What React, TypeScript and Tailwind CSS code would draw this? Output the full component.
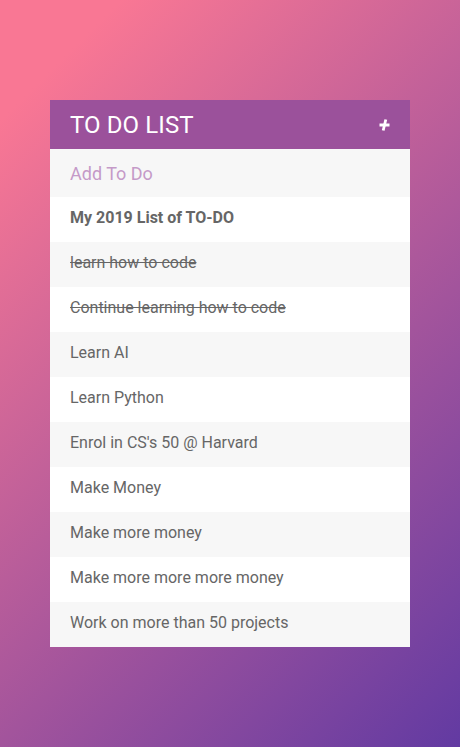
import { useState } from "react";

type Todo = {
  text: string;
  done?: boolean;
  title?: boolean;
};

const initialTodos: Todo[] = [
  { text: "My 2019 List of TO-DO", title: true },
  { text: "learn how to code", done: true },
  { text: "Continue learning how to code", done: true },
  { text: "Learn AI" },
  { text: "Learn Python" },
  { text: "Enrol in CS's 50 @ Harvard" },
  { text: "Make Money" },
  { text: "Make more money" },
  { text: "Make more more more money" },
  { text: "Work on more than 50 projects" },
];

const PlusIcon = () => (
  <svg width="13" height="12" viewBox="0 0 13 12" fill="none">
    <path d="M1.5 6 H11.5" stroke="white" strokeWidth="3" strokeLinecap="butt" />
    <path d="M7.8 0.5 L5.2 11.5" stroke="white" strokeWidth="2.8" strokeLinecap="butt" />
  </svg>
);

const App = () => {
  const [todos, setTodos] = useState<Todo[]>(initialTodos);
  const [draft, setDraft] = useState("");

  const addTodo = () => {
    if (!draft.trim()) return;
    setTodos([...todos, { text: draft.trim() }]);
    setDraft("");
  };

  return (
    <div
      className="min-h-[747px] w-full pt-[100px] font-['Roboto',sans-serif]"
      style={{
        background: "linear-gradient(135deg, #f97794 10%, #623aa2 100%)",
      }}
    >
      <div className="w-[360px] mx-auto">
        <div className="h-[49px] bg-[#9b519b] flex items-center justify-between pl-5 pr-[19px]">
          <h1 className="text-white text-[24px] font-normal leading-none tracking-[0.1px]">
            TO DO LIST
          </h1>
          <button onClick={addTodo} className="flex items-center mt-px">
            <PlusIcon />
          </button>
        </div>

        <input
          value={draft}
          onChange={(e) => setDraft(e.target.value)}
          onKeyDown={(e) => e.key === "Enter" && addTodo()}
          placeholder="Add To Do"
          className="block w-full h-12 bg-[#f7f7f7] px-5 text-[18px] text-[#666] outline-none placeholder:text-[#c59ac8]"
        />

        <ul>
          {todos.map((todo, i) => (
            <li
              key={i}
              className={`h-[45px] flex items-center px-5 pb-1 text-[16px] text-[#666] ${
                i % 2 === 0 ? "bg-white" : "bg-[#f7f7f7]"
              } ${todo.title ? "font-bold" : ""} ${todo.done ? "line-through" : ""}`}
            >
              {todo.text}
            </li>
          ))}
        </ul>
      </div>
    </div>
  );
};

export default App;
